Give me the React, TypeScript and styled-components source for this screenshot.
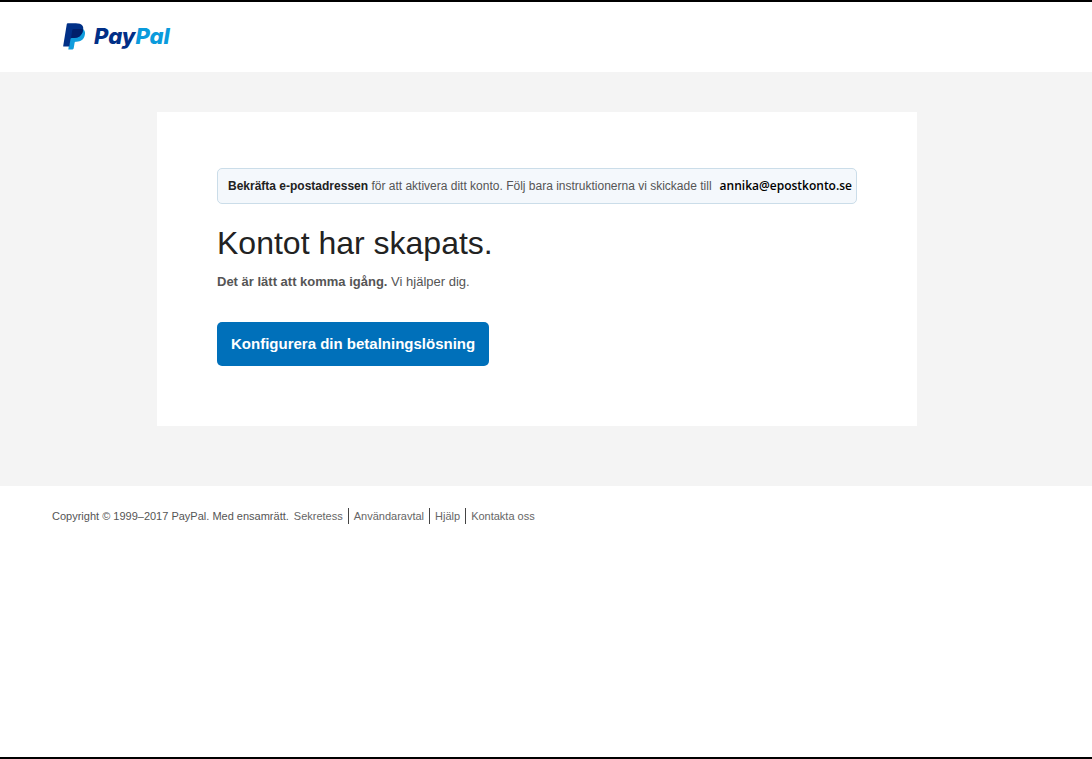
import React from "react";
import styled, { createGlobalStyle } from "styled-components";

const GlobalStyle = createGlobalStyle`
  * { box-sizing: border-box; }
  body {
    margin: 0;
    background: #fff;
    color: #555;
    font-family: "Liberation Sans", Arial, sans-serif;
  }
`;

const Page = styled.div`
  display: flex;
  flex-direction: column;
  min-height: 100vh;
  border-top: 2px solid #000;
  border-bottom: 2px solid #000;
`;

const Container = styled.div`
  width: 100%;
  max-width: 970px;
  margin: 0 auto;
`;

const Header = styled.header`
  padding: 16px 18px 18px 0;
`;

const Logo = styled.a`
  display: flex;
  align-items: center;
  gap: 8px;
  width: max-content;
  height: 36px;
  margin-left: 11px;
  text-decoration: none;
`;

const Wordmark = styled.span`
  font-family: Inter, "Liberation Sans", sans-serif;
  font-size: 22px;
  line-height: 36px;
  font-weight: 800;
  font-style: italic;
  color: #012f87;
`;

const WordmarkAccent = styled.span`
  color: #0a9bdc;
`;

const Main = styled.main`
  padding: 40px 18px 60px 0;
  background: #f4f4f4;
`;

const Card = styled.section`
  width: 100%;
  max-width: 760px;
  margin: 0 auto;
  padding: 56px 60px 60px;
  background: #fff;
`;

const Notice = styled.p`
  display: flex;
  flex-wrap: wrap;
  justify-content: space-between;
  margin: 0;
  padding: 7px 4px 7px 10px;
  border: 1px solid #cbdde9;
  border-radius: 5px;
  background: #f4f8fc;
  font-size: 12px;
  line-height: 20px;
`;

const NoticeLead = styled.strong`
  color: #222;
`;

const Email = styled.strong`
  font-family: "Open Sans", "Noto Sans", sans-serif;
  font-weight: 600;
  color: #000;
`;

const Title = styled.h1`
  margin: 20px 0 10px;
  font-size: 32px;
  line-height: 38px;
  font-weight: 400;
  color: #222;
`;

const Intro = styled.p`
  margin: 0 0 30px;
  font-size: 13px;
  line-height: 20px;
`;

const PrimaryButton = styled.button`
  display: block;
  height: 44px;
  padding: 0 14px;
  border: 0;
  border-radius: 5px;
  background: #0070ba;
  color: #fff;
  font-family: inherit;
  font-size: 15px;
  line-height: 20px;
  font-weight: 700;
  cursor: pointer;
`;

const Footer = styled.footer`
  padding: 22px 18px 22px 0;
  font-size: 11px;
  line-height: 16px;
`;

const FooterRow = styled(Container)`
  display: flex;
  flex-wrap: wrap;
  gap: 5px;
`;

const Links = styled.nav`
  display: flex;
`;

const FooterLink = styled.a`
  color: #666;
  text-decoration: none;

  & + & {
    margin-left: 5px;
    padding-left: 5px;
    border-left: 1px solid #444;
  }
`;

const links = ["Sekretess", "Användaravtal", "Hjälp", "Kontakta oss"];

function Monogram() {
  return (
    <svg width="23" height="27" viewBox="0 0 23 27" aria-hidden="true">
      <path
        d="M20 6C22 7.500 22.400 9.600 21.800 12C20.800 16.700 17.800 18.700 13.600 18.700H12.700C12.100 18.700 11.700 19.100 11.600 19.700L10.700 25.300C10.600 26 10.200 26.400 9.500 26.400H5.300L8 9Z"
        fill="#109ddd"
      />
      <path
        d="M3.800 1.100C3.900 0.600 4.300 0.300 4.800 0.300H12.800C15.900 0.300 18.200 1 19.300 2.400C20.300 3.600 20.500 5.200 20 7.300C18.900 12.800 15.500 15 10.900 15H8.800C8.100 15 7.600 15.400 7.500 16.100L6.300 23.600H0.700C0.300 23.600 0.100 23.300 0.200 22.900Z"
        fill="#013087"
      />
      <path
        d="M9.300 7.100C9.400 6.400 9.900 6 10.600 6H16.500C17.900 6 19.100 6.100 20.100 6.500L20 7.300C18.900 12.800 15.500 15 10.900 15H8.800C8.500 15 8.200 15.100 8 15.300Z"
        fill="#01206b"
      />
    </svg>
  );
}

export default function App() {
  return (
    <>
      <GlobalStyle />
      <Page>
        <Header>
          <Container>
            <Logo href="#">
              <Monogram />
              <Wordmark>
                Pay<WordmarkAccent>Pal</WordmarkAccent>
              </Wordmark>
            </Logo>
          </Container>
        </Header>
        <Main>
          <Card>
            <Notice>
              <span>
                <NoticeLead>Bekräfta e-postadressen</NoticeLead> för att aktivera ditt konto. Följ
                bara instruktionerna vi skickade till
              </span>
              <Email>annika@epostkonto.se</Email>
            </Notice>
            <Title>Kontot har skapats.</Title>
            <Intro>
              <strong>Det är lätt att komma igång.</strong> Vi hjälper dig.
            </Intro>
            <PrimaryButton type="button">Konfigurera din betalningslösning</PrimaryButton>
          </Card>
        </Main>
        <Footer>
          <FooterRow>
            <span>Copyright © 1999–2017 PayPal. Med ensamrätt.</span>
            <Links>
              {links.map((label) => (
                <FooterLink key={label} href="#">
                  {label}
                </FooterLink>
              ))}
            </Links>
          </FooterRow>
        </Footer>
      </Page>
    </>
  );
}
